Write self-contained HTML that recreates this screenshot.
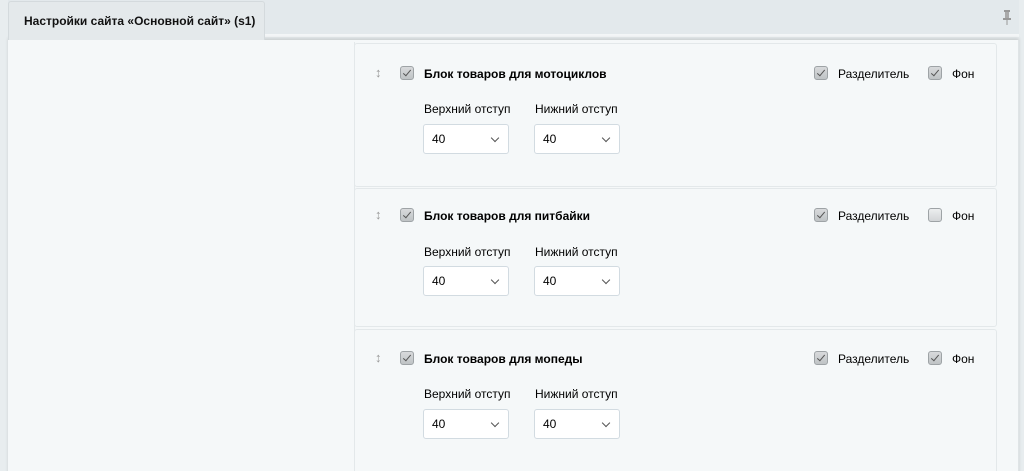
<!DOCTYPE html><html><head><meta charset="utf-8"><style>
html,body{margin:0;width:1024px;height:471px;overflow:hidden}
body{background:#e8edef;font-family:"Liberation Sans",Arial,sans-serif;color:#000;position:relative}
.hdr{position:absolute;left:8px;top:0;width:1011px;height:37px;background:#e3e9ec;border-bottom:3px solid #f3f6f7;box-sizing:border-box}
.tab{position:absolute;left:8px;top:1px;width:257px;height:39px;background:#e4e9eb;border:1px solid #d4dadd;border-bottom:none;border-radius:3px 3px 0 0;box-sizing:border-box;font-size:12px;font-weight:bold;line-height:38px;padding-left:15px;color:#111}
.panel{position:absolute;left:8px;top:40px;width:1011px;height:440px;background:#f5f8f9;box-shadow:0 -2px 3px rgba(0,0,0,.12);border-right:1px solid #dfe4e6;box-sizing:border-box}
.vl{position:absolute;left:354px;top:42px;width:1px;height:440px;background:#e3e8ea}
.blk{position:absolute;left:354px;width:643px;border:1px solid #e3e8ea;border-radius:3px;box-sizing:border-box;background:#f5f8f9}
.arr{position:absolute;left:20px;top:21px;font-size:13px;color:#999}
.cb{position:absolute;width:14px;height:14px;border:1px solid #9ea3a6;border-radius:3px;background:linear-gradient(#d8dadc,#bfc3c5);box-sizing:border-box}
.cb.on::after{content:"";position:absolute;left:4px;top:1px;width:3px;height:7px;border:solid #555;border-width:0 1.5px 1.5px 0;transform:rotate(40deg)}
.cb.off{background:linear-gradient(#eceeef,#d2d5d7)}
.t{position:absolute;font-size:12px;white-space:nowrap}
.sel{position:absolute;width:86px;height:30px;background:#fff;border:1px solid #d2dbe1;border-radius:3px;box-sizing:border-box;font-size:12px;line-height:28px;padding-left:8px}
.sel::after{content:"";position:absolute;right:10px;top:10px;width:5px;height:5px;border:solid #555;border-width:0 1px 1px 0;transform:rotate(45deg)}
</style></head><body>
<div class="hdr"><div style="position:absolute;right:8px;top:10px;width:8px;height:16px">
<svg width="8" height="16" viewBox="0 0 8 16"><rect x="1" y="0" width="6" height="2" fill="#999"/><rect x="2" y="2" width="4" height="6" fill="#aaa"/><rect x="0" y="8" width="8" height="2" fill="#999"/><rect x="3.5" y="10" width="1" height="5" fill="#999"/></svg></div></div>
<div class="panel"></div>
<div class="tab">Настройки сайта «Основной сайт» (s1)</div>
<div class="vl"></div>

<div class="blk" style="top:43px;height:144px">
<div class="arr">↕</div><div class="cb on" style="left:45px;top:22px"></div><div class="t" style="left:69px;top:23px;font-weight:bold">Блок товаров для мотоциклов</div>
<div class="cb on" style="left:459px;top:22px"></div><div class="t" style="left:483px;top:23px">Разделитель</div>
<div class="cb on" style="left:573px;top:22px"></div><div class="t" style="left:597px;top:23px">Фон</div>
<div class="t" style="left:69px;top:58px">Верхний отступ</div><div class="t" style="left:180px;top:58px">Нижний отступ</div>
<div class="sel" style="left:68px;top:80px">40</div><div class="sel" style="left:179px;top:80px">40</div>
</div>
<div class="blk" style="top:188px;height:139px">
<div class="arr" style="top:18px">↕</div><div class="cb on" style="left:45px;top:19px"></div><div class="t" style="left:69px;top:20px;font-weight:bold">Блок товаров для питбайки</div>
<div class="cb on" style="left:459px;top:19px"></div><div class="t" style="left:483px;top:20px">Разделитель</div>
<div class="cb off" style="left:573px;top:19px"></div><div class="t" style="left:597px;top:20px">Фон</div>
<div class="t" style="left:69px;top:56px">Верхний отступ</div><div class="t" style="left:180px;top:56px">Нижний отступ</div>
<div class="sel" style="left:68px;top:77px">40</div><div class="sel" style="left:179px;top:77px">40</div>
</div>
<div class="blk" style="top:329px;height:160px">
<div class="arr" style="top:20px">↕</div><div class="cb on" style="left:45px;top:21px"></div><div class="t" style="left:69px;top:22px;font-weight:bold">Блок товаров для мопеды</div>
<div class="cb on" style="left:459px;top:21px"></div><div class="t" style="left:483px;top:22px">Разделитель</div>
<div class="cb on" style="left:573px;top:21px"></div><div class="t" style="left:597px;top:22px">Фон</div>
<div class="t" style="left:69px;top:57px">Верхний отступ</div><div class="t" style="left:180px;top:57px">Нижний отступ</div>
<div class="sel" style="left:68px;top:79px">40</div><div class="sel" style="left:179px;top:79px">40</div>
</div>
</body></html>
